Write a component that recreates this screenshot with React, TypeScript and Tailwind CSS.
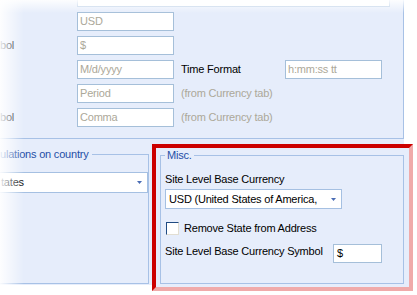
import React from "react";

const inputCls =
  "h-[19px] w-[97px] shrink-0 border border-[#a5bfd9] bg-white pl-[2px] leading-[17px] whitespace-nowrap overflow-hidden";

function Arrow() {
  return (
    <svg width="5" height="3" viewBox="0 0 5 3" className="shrink-0">
      <polygon points="0,0 5,0 2.5,3" fill="#4a6cb4" />
    </svg>
  );
}

function Row({
  label,
  value,
  mid,
  midGray,
  right,
}: {
  label?: string;
  value: string;
  mid?: string;
  midGray?: boolean;
  right?: string;
}) {
  return (
    <div className="flex h-[19px] items-center">
      <div className="w-[77px] shrink-0 leading-[13px]">{label}</div>
      <div className={`${inputCls} text-[#aca899]`}>{value}</div>
      {mid && (
        <div
          className={`ml-[7px] w-[104px] shrink-0 leading-[13px] whitespace-nowrap ${
            midGray ? "text-[#aca899]" : "text-black"
          }`}
        >
          {mid}
        </div>
      )}
      {right && <div className={`${inputCls} text-[#aca899]`}>{right}</div>}
    </div>
  );
}

export default function App() {
  return (
    <div className="relative h-[295px] w-[417px] overflow-hidden bg-white font-['Liberation_Sans',Arial,sans-serif] text-[11px] tracking-[-0.2px] text-black">
      {/* top panel */}
      <div className="flex h-[139px] w-[404px] flex-col border-r border-b border-[#a7c1e6] bg-[#e6edfb]">
        <div className="ml-[77px] h-[7px] w-[313px] border-x border-b border-[#b9cde6] bg-white" />
        <div className="mt-[5px] flex flex-col gap-[5px]">
          <Row value="USD" />
          <Row label="bol" value="$" />
          <Row value="M/d/yyyy" mid="Time Format" right="h:mm:ss tt" />
          <Row value="Period" mid="(from Currency tab)" midGray />
          <Row label="bol" value="Comma" mid="(from Currency tab)" midGray />
        </div>
      </div>

      {/* lower area */}
      <div className="flex h-[146px] w-[404px] items-start bg-[#e6edfb]">
        <div className="w-[152px] shrink-0 pt-[9px]">
          <fieldset className="h-[136px] w-[149px] border border-l-0 border-[#a7c1e6]">
            <legend className="pr-[3px] leading-[13px] text-[#1f4fa6]">
              ulations on country
            </legend>
            <div className="mt-[11px] flex h-[21px] w-[148px] items-center justify-between border border-l-0 border-[#a5c0e2] bg-white pl-[1px] pr-[5px]">
              <span className="leading-[13px]">tates</span>
              <Arrow />
            </div>
          </fieldset>
        </div>

        <div className="mt-[5px] h-[147px] w-[261px] shrink-0 border-4 border-[#cc0000] border-r-[#f0aaaa] border-b-[#f0aaaa] bg-[#e6edfb]">
          <fieldset className="mt-[1px] ml-[4px] h-[135px] w-[244px] border border-[#a7c1e6]">
            <legend className="ml-[4px] px-[2px] leading-[13px] text-[#1f4fa6]">
              Misc.
            </legend>
            <div className="pl-[4px]">
              <div className="mt-[11px] leading-[13px]">Site Level Base Currency</div>
              <div className="mt-[3px] flex h-[20px] w-[177px] items-center justify-between border border-[#a5c0e2] bg-white pl-[3px] pr-[5px]">
                <span className="leading-[13px] whitespace-nowrap">
                  USD (United States of America,
                </span>
                <Arrow />
              </div>
              <div className="mt-[13px] flex h-[13px] items-center gap-[5px] pl-[1px]">
                <div className="h-[13px] w-[13px] border border-[#1f4a82] border-r-[#e2ded2] border-b-[#e2ded2] bg-white" />
                <span className="leading-[13px]">Remove State from Address</span>
              </div>
              <div className="mt-[9px] flex items-start">
                <div className="mt-[1px] w-[168px] shrink-0 leading-[13px] whitespace-nowrap">
                  Site Level Base Currency Symbol
                </div>
                <div className="h-[19px] w-[49px] border border-[#a5bfd9] bg-white pl-[3px] leading-[17px]">
                  $
                </div>
              </div>
            </div>
          </fieldset>
        </div>
      </div>

      {/* screenshot edge fades */}
      <div className="pointer-events-none absolute top-0 left-0 h-[13px] w-full bg-[linear-gradient(to_bottom,rgba(255,255,255,0.9),rgba(255,255,255,0))]" />
      <div className="pointer-events-none absolute top-0 left-0 h-full w-[24px] bg-[linear-gradient(to_right,rgba(255,255,255,0.92),rgba(255,255,255,0))]" />
    </div>
  );
}
